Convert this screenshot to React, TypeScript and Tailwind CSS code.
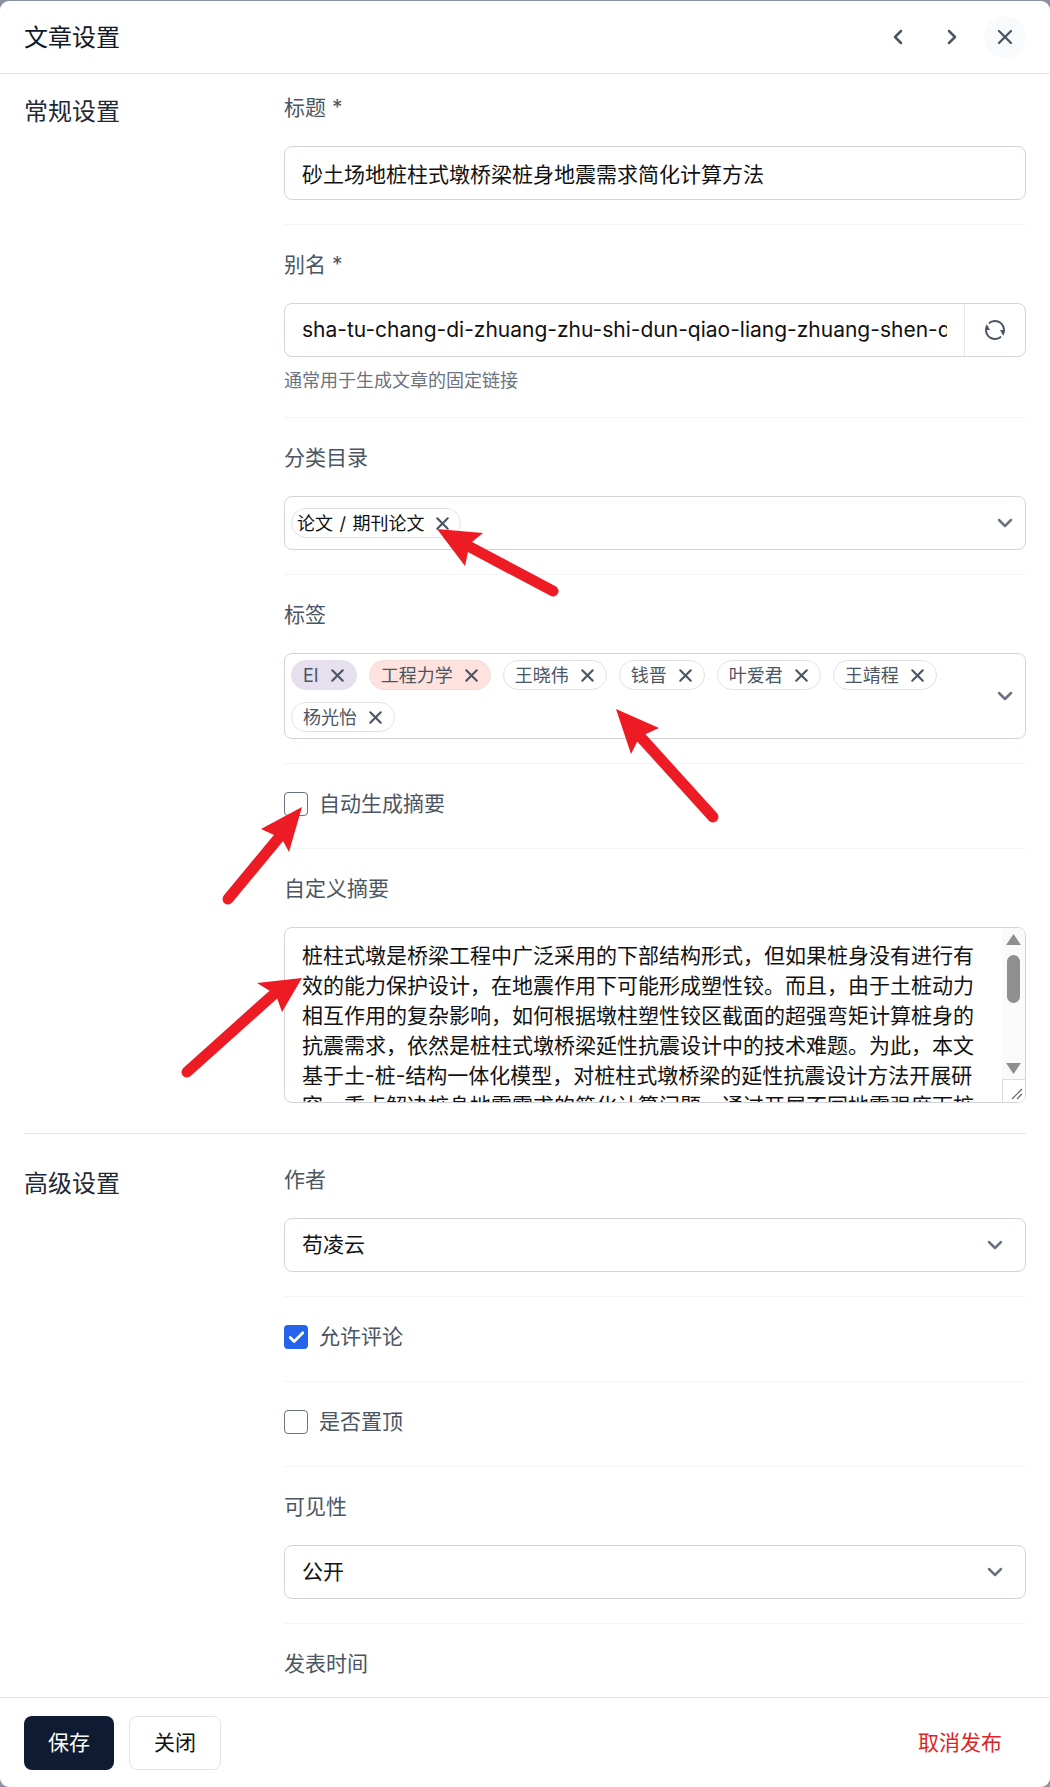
import { Check, ChevronDown, ChevronLeft, ChevronRight, X } from 'lucide-react'
import { RiRefreshLine } from 'react-icons/ri'
import type { ReactNode } from 'react'

const fontStack = "font-['Inter','Noto_Sans_CJK_SC',sans-serif]"

const abstractText =
    '桩柱式墩是桥梁工程中广泛采用的下部结构形式，但如果桩身没有进行有效的能力保护设计，在地震作用下可能形成塑性铰。而且，由于土桩动力相互作用的复杂影响，如何根据墩柱塑性铰区截面的超强弯矩计算桩身的抗震需求，依然是桩柱式墩桥梁延性抗震设计中的技术难题。为此，本文基于土-桩-结构一体化模型，对桩柱式墩桥梁的延性抗震设计方法开展研究，重点解决桩身地震需求的简化计算问题。通过开展不同地震强度下桩身响应的参数分析，提出了简化计算方法。'

const tags = [
    { name: 'EI', className: 'bg-[#e5dfee] border-[#e5dfee]' },
    { name: '工程力学', className: 'bg-[#fee2de] border-[#f5dcd8]' },
    { name: '王晓伟', className: 'bg-white border-[#e0e2e6]' },
    { name: '钱晋', className: 'bg-white border-[#e0e2e6]' },
    { name: '叶爱君', className: 'bg-white border-[#e0e2e6]' },
    { name: '王靖程', className: 'bg-white border-[#e0e2e6]' },
    { name: '杨光怡', className: 'bg-white border-[#e0e2e6]' },
]

function Label({ children }: { children: ReactNode }) {
    return <div className="pt-px text-[21px] leading-[30px] text-[#4b5563] mb-[23px]">{children}</div>
}

function Select({ value }: { value: string }) {
    return (
        <div className="h-[54px] border border-[#d1d5db] rounded-lg pl-[17px] pr-[18px] flex items-center justify-between text-[21px] text-[#111]">
            <span>{value}</span>
            <ChevronDown size={24} strokeWidth={2.5} className="text-[#6b7280]" />
        </div>
    )
}

function CheckRow({ label, checked }: { label: string; checked?: boolean }) {
    return (
        <div className="h-[30px] flex items-center gap-[11px] text-[21px] text-[#4b5563]">
            {checked ? (
                <span className="w-6 h-6 rounded bg-[#2563eb] flex items-center justify-center">
                    <Check size={19} strokeWidth={3.5} className="text-white" />
                </span>
            ) : (
                <span className="w-6 h-6 rounded border border-[#6b7280] bg-white" />
            )}
            <span>{label}</span>
        </div>
    )
}

function Arrow({ head, tail }: { head: string; tail: number[] }) {
    const first = head.split(' ')
    const [n1x, n1y] = first[2].split(',').map(Number)
    const [n2x, n2y] = first[3].split(',').map(Number)
    return (
        <g fill="#ed1c24" stroke="none">
            <polygon points={head} />
            <line
                x1={(n1x + n2x) / 2}
                y1={(n1y + n2y) / 2}
                x2={tail[0]}
                y2={tail[1]}
                stroke="#ed1c24"
                strokeWidth={11}
                strokeLinecap="round"
            />
        </g>
    )
}

function App() {
    return (
        <div className={`relative h-screen overflow-hidden bg-[#8b92a0] pt-px ${fontStack}`}>
            <div className="h-full bg-white rounded-[9px] flex flex-col overflow-hidden">
                {/* Cabeçalho */}
                <div className="h-[73px] shrink-0 border-b border-[#e5e7eb] pl-6 pr-6 flex items-center justify-between">
                    <h1 className="pt-[2px] text-[24px] text-[#111827]">文章设置</h1>
                    <div className="flex items-center text-[#4b5563]">
                        <ChevronLeft size={24} strokeWidth={2.5} className="mr-[30px]" />
                        <ChevronRight size={24} strokeWidth={2.5} className="mr-[20px]" />
                        <span className="w-[42px] h-[42px] rounded-full bg-[#f8fafc] flex items-center justify-center">
                            <X size={24} strokeWidth={2.3} />
                        </span>
                    </div>
                </div>

                {/* Conteúdo */}
                <div className="flex-1 overflow-hidden px-6">
                    <section className="flex border-b border-[#e5e7eb] pb-[30px]">
                        <h2 className="w-[260px] shrink-0 pt-5 text-[24px] leading-9 text-[#1f2937]">常规设置</h2>
                        <div className="flex-1 min-w-0">
                            <div className="pt-[18px] pb-6 border-b border-[#f3f4f6]">
                                <Label>标题 *</Label>
                                <input
                                    readOnly
                                    defaultValue="砂土场地桩柱式墩桥梁桩身地震需求简化计算方法"
                                    className="block w-full h-[54px] border border-[#d1d5db] rounded-lg px-[17px] text-[21px] text-[#111] outline-none"
                                />
                            </div>
                            <div className="pt-6 pb-[23px] border-b border-[#f3f4f6]">
                                <Label>别名 *</Label>
                                <div className="h-[54px] border border-[#d1d5db] rounded-lg flex overflow-hidden">
                                    <input
                                        readOnly
                                        defaultValue="sha-tu-chang-di-zhuang-zhu-shi-dun-qiao-liang-zhuang-shen-di-zhen-xu-qiu-jian-hua-ji-suan-fang-fa"
                                        className="flex-1 min-w-0 px-[17px] text-[21px] text-[#111] outline-none"
                                    />
                                    <span className="w-[61px] shrink-0 border-l border-[#e5e7eb] flex items-center justify-center text-[#4b5563]">
                                        <RiRefreshLine size={24} />
                                    </span>
                                </div>
                                <p className="mt-[10px] text-[18px] leading-[27px] text-[#6b7280]">通常用于生成文章的固定链接</p>
                            </div>
                            <div className="pt-6 pb-6 border-b border-[#f3f4f6]">
                                <Label>分类目录</Label>
                                <div className="h-[54px] border border-[#d1d5db] rounded-lg pl-[6px] pr-[8px] flex items-center justify-between">
                                    <span className="h-[30px] border border-[#e0e2e6] rounded-full pl-[5px] pr-[7px] flex items-center gap-[7px] text-[18px] text-[#111] [word-spacing:1.5px]">
                                        论文 / 期刊论文
                                        <X size={21} strokeWidth={2.4} className="text-[#4b5563]" />
                                    </span>
                                    <ChevronDown size={24} strokeWidth={2.5} className="text-[#6b7280]" />
                                </div>
                            </div>
                            <div className="pt-6 pb-6 border-b border-[#f3f4f6]">
                                <Label>标签</Label>
                                <div className="border border-[#d1d5db] rounded-lg pl-[6px] pr-[8px] py-[6px] flex items-center justify-between">
                                    <div className="flex flex-wrap gap-3 w-[660px]">
                                        {tags.map((tag) => (
                                            <span
                                                key={tag.name}
                                                className={`h-[30px] border rounded-full pl-[11px] pr-2 flex items-center gap-2 text-[18px] text-[#4b5563] ${tag.className}`}
                                            >
                                                {tag.name}
                                                <X size={21} strokeWidth={2.4} className="text-[#4b5563]" />
                                            </span>
                                        ))}
                                    </div>
                                    <ChevronDown size={24} strokeWidth={2.5} className="text-[#6b7280]" />
                                </div>
                            </div>
                            <div className="pt-[25px] pb-[29px] border-b border-[#f3f4f6]">
                                <CheckRow label="自动生成摘要" />
                            </div>
                            <div className="pt-6">
                                <Label>自定义摘要</Label>
                                <div className="relative h-[176px] border border-[#d1d5db] rounded-lg overflow-hidden">
                                    <textarea
                                        readOnly
                                        defaultValue={abstractText}
                                        className="block w-full h-full resize-none overflow-hidden pl-[17px] pr-[42px] pt-[13px] text-[21px] leading-[30px] text-[#111] outline-none"
                                    />
                                    {/* Barra de rolagem do textarea */}
                                    <div className="absolute top-0 right-0 bottom-0 w-[23px] bg-[#fafafa]">
                                        <svg width="23" height="174" viewBox="0 0 23 174">
                                            <polygon points="4,17 19,17 11.5,6" fill="#8f8f8f" />
                                            <rect x="5" y="27" width="13" height="48" rx="6.5" fill="#8f8f8f" />
                                            <polygon points="4,135 19,135 11.5,146" fill="#8f8f8f" />
                                            <rect x="0.5" y="151.5" width="23" height="23" fill="#fff" stroke="#dcdcdc" />
                                            <path d="M10 171 L20 161 M15 171 L20 166" stroke="#666" strokeWidth="1.2" />
                                        </svg>
                                    </div>
                                </div>
                            </div>
                        </div>
                    </section>

                    <section className="flex">
                        <h2 className="w-[260px] shrink-0 pt-8 text-[24px] leading-9 text-[#1f2937]">高级设置</h2>
                        <div className="flex-1 min-w-0">
                            <div className="pt-[30px] pb-6 border-b border-[#f3f4f6]">
                                <Label>作者</Label>
                                <Select value="苟凌云" />
                            </div>
                            <div className="pt-[25px] pb-[29px] border-b border-[#f3f4f6]">
                                <CheckRow label="允许评论" checked />
                            </div>
                            <div className="pt-[25px] pb-[29px] border-b border-[#f3f4f6]">
                                <CheckRow label="是否置顶" />
                            </div>
                            <div className="pt-6 pb-6 border-b border-[#f3f4f6]">
                                <Label>可见性</Label>
                                <Select value="公开" />
                            </div>
                            <div className="pt-6">
                                <Label>发表时间</Label>
                            </div>
                        </div>
                    </section>
                </div>

                {/* Rodapé */}
                <div className="h-[90px] shrink-0 border-t border-[#e5e7eb] px-6 pt-[18px] flex items-start justify-between">
                    <div className="flex gap-[15px]">
                        <button className="h-[54px] px-6 rounded-lg bg-[#0f1a33] text-[21px] text-white">保存</button>
                        <button className="h-[54px] px-6 rounded-lg border border-[#e0e2e6] bg-white text-[21px] text-[#111]">关闭</button>
                    </div>
                    <button className="h-[54px] px-6 text-[21px] text-[#dc2626]">取消发布</button>
                </div>
            </div>

            {/* Setas vermelhas de anotação */}
            <svg className="absolute inset-0 w-full h-full pointer-events-none" viewBox="0 0 1050 1787">
                <Arrow head="437,529 483,533 472,542 468,552 465,566" tail={[553, 591]} />
                <Arrow head="616,709 659,728 646,734 637,742 631,754" tail={[713, 817]} />
                <Arrow head="302,807 261,829 274,835 283,841 289,852" tail={[228, 899]} />
                <Arrow head="302,978 257,983 270,991 277,998 282,1012" tail={[187, 1072]} />
            </svg>
        </div>
    )
}

export default App
